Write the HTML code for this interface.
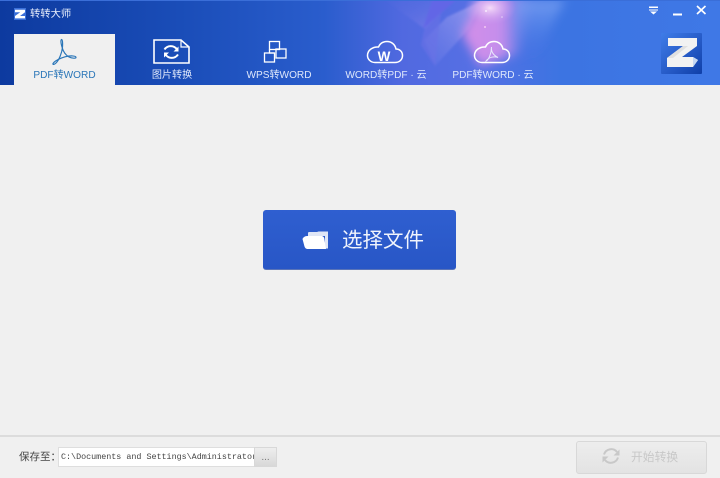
<!DOCTYPE html>
<html lang="zh"><head><meta charset="utf-8"><title>转转大师</title>
<style>
html,body{margin:0;padding:0;width:720px;height:478px;overflow:hidden;background:#f0f0f0}
body{position:relative;font-family:"Liberation Sans","Noto Sans CJK SC",sans-serif}
.abs,.abs *{box-sizing:border-box}
.abs{position:absolute}
.lab{position:absolute;top:68px;height:16px;line-height:16px;font-size:10.1px;color:#dfe8fb;text-align:center;white-space:nowrap}
</style></head>
<body>
<svg class="abs" style="left:0;top:0" width="720" height="85" viewBox="0 0 720 85">
<defs>
<linearGradient id="hd" x1="0" x2="1" y1="0" y2="0">
<stop offset="0" stop-color="#0d3a9f"/><stop offset=".25" stop-color="#1a4db8"/><stop offset=".45" stop-color="#2a5dcd"/><stop offset=".56" stop-color="#5169e0"/><stop offset=".66" stop-color="#5670e4"/><stop offset=".78" stop-color="#3c74e2"/><stop offset="1" stop-color="#3f78e6"/>
</linearGradient>
<linearGradient id="s1" x1="0" x2="1" y1="0" y2="1"><stop offset="0" stop-color="#4a68dc" stop-opacity=".2"/><stop offset="1" stop-color="#8480ec"/></linearGradient>
<linearGradient id="s2" x1="0" x2="1" y1="1" y2="0"><stop offset="0" stop-color="#6276e6" stop-opacity=".4"/><stop offset="1" stop-color="#a9a6f2"/></linearGradient>
<linearGradient id="s3" x1="0" x2="1" y1="0" y2="0"><stop offset="0" stop-color="#d48ee8"/><stop offset=".55" stop-color="#c48eec"/><stop offset="1" stop-color="#6c80ea" stop-opacity="0"/></linearGradient>
<linearGradient id="s5" x1="0" x2="0" y1="0" y2="1"><stop offset="0" stop-color="#86aaf6"/><stop offset="1" stop-color="#3f78e6" stop-opacity="0"/></linearGradient>
<radialGradient id="s4"><stop offset="0" stop-color="#f6dcf8"/><stop offset="1" stop-color="#c89cf0" stop-opacity="0"/></radialGradient>
<filter id="b1" x="-10%" y="-10%" width="120%" height="120%"><feGaussianBlur stdDeviation="1"/></filter>
<filter id="b2" x="-30%" y="-30%" width="160%" height="160%"><feGaussianBlur stdDeviation="5"/></filter>
</defs>
<rect width="720" height="85" fill="url(#hd)"/>
<g filter="url(#b1)">
<polygon points="385,0 455,0 425,29" fill="url(#s1)" opacity=".8"/>
<polygon points="423,29 432,0 456,0 441,13" fill="#6266e6"/>
<polygon points="447,17 484,0 470,28 435,66 424,40" fill="url(#s2)" opacity=".85"/>
<polygon points="424,30 441,13 435,66 421,45" fill="#6a72e6" opacity=".6"/>
</g>
<g filter="url(#b2)">
<polygon points="462,34 482,-6 535,-6 518,54 480,66" fill="url(#s3)"/>
<polygon points="515,0 565,0 535,60 510,60" fill="url(#s5)" opacity=".7"/>
</g>
<ellipse cx="490" cy="8" rx="26" ry="17" fill="url(#s4)"/>
<circle cx="486" cy="11" r="1" fill="#fff" opacity=".7"/><circle cx="485" cy="27" r="1" fill="#f5c8f0"/><circle cx="502" cy="17" r=".8" fill="#fff" opacity=".6"/>
<rect y="0" width="720" height="1" fill="#3a6ed8"/>
</svg>

<svg class="abs" style="left:14px;top:8px" width="12" height="12" viewBox="0 0 12 12">
<rect width="12" height="12" fill="#3a6fd8"/>
<path d="M1 1.800H11V4.200L6 8H11V10.400H1V8L6.200 4.200H1Z" fill="#fff"/>
</svg>
<div class="abs" style="left:30px;top:7px;height:16px;line-height:16px;font-size:10.300px;color:#e8eefc;white-space:nowrap">转转大师</div>

<svg class="abs" style="left:647px;top:4px" width="62" height="12" viewBox="0 0 62 12">
<path d="M2 2.500H11V4H2Z M2 5.500H11V6.500H2Z" fill="#fff"/><path d="M3 7.500H10L6.500 10.500Z" fill="#fff"/>
<rect x="26" y="9.500" width="9" height="2" fill="#fff"/>
<path d="M50 2L58.500 10M58.500 2L50 10" stroke="#fff" stroke-width="1.700" fill="none"/>
</svg>

<svg class="abs" style="left:661px;top:33px" width="41" height="41" viewBox="0 0 41 41">
<defs><linearGradient id="zb" x1="0" x2="1" y1="0" y2="1"><stop offset="0" stop-color="#3f7ce8"/><stop offset=".6" stop-color="#2458c4"/><stop offset="1" stop-color="#0f3fa8"/></linearGradient></defs>
<rect width="41" height="41" rx="1" fill="url(#zb)"/>
<path d="M7 5H36V13L21 24H32L37 27L32 34H6V25L22 13H7Z" fill="#f2f2f2"/>
<path d="M32 24L37 27L32 34Z" fill="#c4d6f2"/>
<path d="M6 25L22 13H27L12 25Z" fill="#e0e0e0"/>
</svg>

<div class="abs" style="left:14px;top:34px;width:101px;height:51px;background:#f0f0f0"></div>
<svg class="abs" style="left:50px;top:38px" width="30" height="28" viewBox="0 0 30 28" fill="none" stroke="#2a76b8" stroke-width="1.200">
<path d="M11.500 1.500C10.500 2 11 5.500 12 9C13 13 15.500 17 19 19C22 20.500 26 20.500 26 19.500C26 17.500 20 17.500 15 18.800C10 20.200 4.500 23 3 25.500C2.500 27 4.500 26.500 6 25C9 22 12 15 12.500 9C12.800 5 12.500 1.500 11.500 1.500Z"/>
</svg>
<div class="lab" style="left:14px;width:101px;color:#2a76b8;">PDF转WORD</div>

<svg class="abs" style="left:153px;top:39px" width="37" height="25" viewBox="0 0 37 25" fill="none" stroke="#fff">
<path d="M1 1H28L36 8V24H1Z" stroke-width="1.600"/>
<path d="M28 1V8H36" stroke-width="1.200"/>
<path d="M11.500 10.500A7.500 7.500 0 0 1 24 10.500" stroke-width="2"/>
<path d="M25 15.500A7.500 7.500 0 0 1 12.500 15.500" stroke-width="2"/>
<path d="M25.500 7.500V12.500H20.500Z M11 18.500V13.500H16Z" fill="#fff" stroke="none"/>
</svg>
<div class="lab" style="left:140px;width:64px">图片转换</div>

<svg class="abs" style="left:263px;top:40px" width="26" height="24" viewBox="0 0 26 24" fill="none" stroke="#fff" stroke-width="1.300">
<rect x="6.500" y="1.500" width="10" height="8"/>
<rect x="1.500" y="13" width="10" height="9"/>
<rect x="13" y="9" width="10" height="9"/>
<path d="M6.500 9.500V13H11.500" />
</svg>
<div class="lab" style="left:235px;width:88px">WPS转WORD</div>

<svg class="abs" style="left:366px;top:40px" width="38" height="24" viewBox="0 0 38 24" fill="none" stroke="#fff" stroke-width="1.500">
<path d="M9 22.500H29C33.500 22.500 36.500 19.500 36.500 15.500C36.500 11.500 33.500 9 30 9C29 4 25 1.500 21 1.500C17 1.500 14 3.500 12.500 7C7 6.500 1.500 10 1.500 15.500C1.500 19.500 5 22.500 9 22.500Z"/>
</svg>
<div class="abs" style="left:377px;top:50px;width:14px;text-align:center;font:bold 13.500px/13px 'Liberation Sans',sans-serif;color:#fff">W</div>
<div class="lab" style="left:336px;width:100px">WORD转PDF · 云</div>

<svg class="abs" style="left:473px;top:40px" width="38" height="24" viewBox="0 0 38 24" fill="none" stroke="#fff" stroke-width="1.500">
<path d="M9 22.500H29C33.500 22.500 36.500 19.500 36.500 15.500C36.500 11.500 33.500 9 30 9C29 4 25 1.500 21 1.500C17 1.500 14 3.500 12.500 7C7 6.500 1.500 10 1.500 15.500C1.500 19.500 5 22.500 9 22.500Z"/>
<path d="M18.500 7C18 11 20 15 25 17.500C21 16 16 17 13 21C15.500 20.500 18.500 13 18.500 7Z" stroke-width="1" stroke="#e6e4fb"/>
</svg>
<div class="lab" style="left:443px;width:100px">PDF转WORD · 云</div>

<div class="abs" style="left:263px;top:210px;width:193px;height:60px;border-radius:3px;background:linear-gradient(#2f5fd0,#2856c6);border-bottom:1px solid #5a74b8"></div>
<svg class="abs" style="left:302px;top:230px" width="27" height="20" viewBox="0 0 27 20">
<path d="M6 4V3C6 2.500 6.500 2 7 2H15L16.500 1.500H26V18.500H23V6H6Z" fill="#dfe6f6"/>
<path d="M0.500 9C1 7.500 3 6 5 6H19C21 6 22 7 22.300 8.500L24 19H6C4 19 3 18 2.500 16.500Z" fill="#fff"/>
</svg>
<div class="abs" style="left:342px;top:227px;height:28px;line-height:28px;font-size:20.500px;color:#f0f4fc;white-space:nowrap;">选择文件</div>

<div class="abs" style="left:0;top:435px;width:720px;height:2px;background:#dcdcdc"></div>
<div class="abs" style="left:19px;top:449px;height:16px;line-height:16px;font-size:10.500px;color:#444;white-space:nowrap">保存至：</div>
<div class="abs" style="left:58px;top:447px;width:197px;height:20px;background:#fff;border:1px solid #dedede;padding-left:2px;font:8.400px/18px 'Liberation Mono','Noto Sans CJK SC',monospace;color:#444;white-space:nowrap;overflow:hidden">C:\Documents and Settings\Administrator</div>
<div class="abs" style="left:254px;top:447px;width:23px;height:20px;background:linear-gradient(#eeeeee,#d8d8d8);border:1px solid #d8d8d8;text-align:center;font-size:10px;line-height:20px;color:#777">...</div>

<div class="abs" style="left:576px;top:441px;width:131px;height:33px;border-radius:3px;background:linear-gradient(#ededed,#e3e3e3);border:1px solid #d8d8d8"></div>
<svg class="abs" style="left:601px;top:446px" width="20" height="20" viewBox="0 0 20 20" fill="none" stroke="#c8c8c8" stroke-width="2">
<path d="M3 8.500A7.500 7.500 0 0 1 16 6"/><path d="M17 11.500A7.500 7.500 0 0 1 4 14"/>
<path d="M18.500 3.500V9.500H12.500Z M1.500 16.500V10.500H7.500Z" fill="#c8c8c8" stroke="none"/>
</svg>
<div class="abs" style="left:631px;top:449px;height:16px;line-height:16px;font-size:11.800px;color:#c8c8c8;white-space:nowrap">开始转换</div>
</body></html>
